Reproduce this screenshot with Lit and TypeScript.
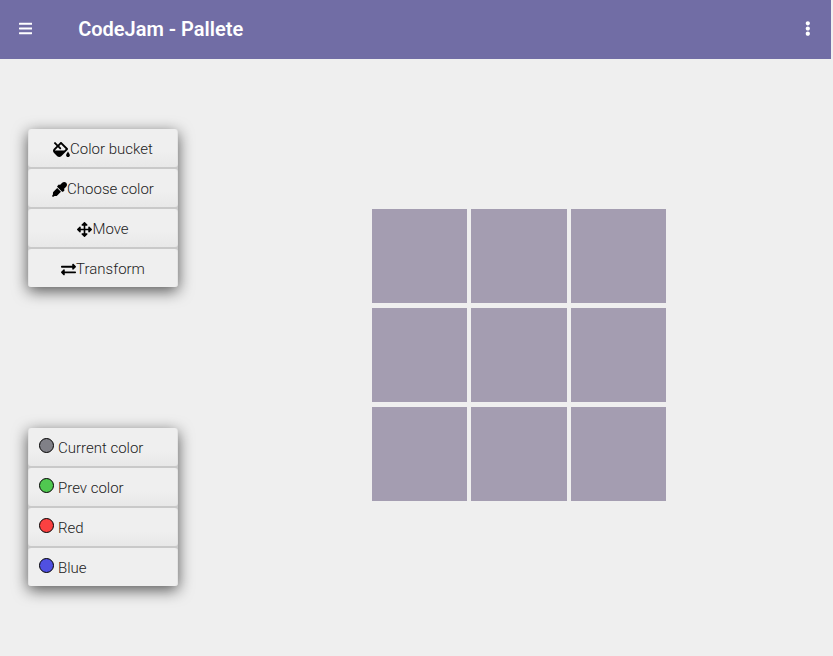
import { LitElement, html, css, svg } from "lit";
import { customElement } from "lit/decorators.js";
import { classMap } from "lit/directives/class-map.js";

interface Glyph {
  width: number;
  path: string;
}

const glyphs: Record<string, Glyph> = {
  bars: {
    width: 448,
    path: "M16 132h416c8.837 0 16-7.163 16-16V76c0-8.837-7.163-16-16-16H16C7.163 60 0 67.163 0 76v40c0 8.837 7.163 16 16 16zm0 160h416c8.837 0 16-7.163 16-16v-40c0-8.837-7.163-16-16-16H16c-8.837 0-16 7.163-16 16v40c0 8.837 7.163 16 16 16zm0 160h416c8.837 0 16-7.163 16-16v-40c0-8.837-7.163-16-16-16H16c-8.837 0-16 7.163-16 16v40c0 8.837 7.163 16 16 16z",
  },
  dots: {
    width: 192,
    path: "M96 184c39.8 0 72 32.2 72 72s-32.2 72-72 72-72-32.2-72-72 32.2-72 72-72zM24 80c0 39.8 32.2 72 72 72s72-32.2 72-72S135.8 8 96 8 24 40.2 24 80zm0 352c0 39.8 32.2 72 72 72s72-32.2 72-72-32.2-72-72-72-72 32.2-72 72z",
  },
  bucket: {
    width: 576,
    path: "M512 320s-64 92.65-64 128c0 35.35 28.66 64 64 64s64-28.65 64-64-64-128-64-128zm-9.37-102.94L294.94 9.37C288.69 3.12 280.5 0 272.31 0s-16.38 3.12-22.62 9.37l-81.58 81.58L81.93 4.76c-6.25-6.25-16.38-6.25-22.62 0L36.69 27.38c-6.24 6.25-6.24 16.38 0 22.62l86.19 86.18-94.76 94.76c-37.49 37.48-37.49 98.26 0 135.75l117.19 117.19c18.74 18.74 43.31 28.12 67.87 28.12 24.57 0 49.13-9.37 67.87-28.12l221.57-221.57c12.5-12.5 12.5-32.75.01-45.25zm-116.22 70.97H65.93c1.36-3.84 3.57-7.98 7.43-11.83l13.15-13.15 81.61-81.61 58.6 58.6c12.49 12.49 32.75 12.49 45.24 0s12.49-32.75 0-45.24l-58.6-58.6 58.95-58.95 162.44 162.44-48.34 48.34z",
  },
  dropper: {
    width: 512,
    path: "M50.75 333.25c-12 12-18.75 28.28-18.75 45.26V424L0 480l32 32 56-32h45.49c16.97 0 33.25-6.74 45.25-18.74l126.64-126.62-128-128L50.75 333.25zM483.88 28.12c-37.47-37.5-98.28-37.5-135.75 0l-77.09 77.09-13.1-13.1c-9.44-9.44-24.65-9.31-33.94 0l-40.97 40.97c-9.37 9.37-9.37 24.57 0 33.94l161.94 161.94c9.44 9.44 24.65 9.31 33.94 0L419.88 288c9.37-9.37 9.37-24.57 0-33.94l-13.1-13.1 77.09-77.09c37.51-37.48 37.51-98.26.01-135.75z",
  },
  move: {
    width: 512,
    path: "M352.201 425.775l-79.196 79.196c-9.373 9.373-24.568 9.373-33.941 0l-79.196-79.196c-15.119-15.119-4.411-40.971 16.971-40.97h51.162L228 284H127.196v51.162c0 21.382-25.851 32.09-40.971 16.971L7.029 272.937c-9.373-9.373-9.373-24.569 0-33.941L86.225 159.8c15.119-15.119 40.971-4.411 40.971 16.971V228H228V127.196h-51.23c-21.382 0-32.09-25.851-16.971-40.971l79.196-79.196c9.373-9.373 24.568-9.373 33.941 0l79.196 79.196c15.119 15.119 4.411 40.971-16.971 40.971h-51.162V228h100.804v-51.162c0-21.382 25.851-32.09 40.97-16.971l79.196 79.196c9.373 9.373 9.373 24.569 0 33.941L425.773 352.2c-15.119 15.119-40.971 4.411-40.97-16.971V284H284v100.804h51.23c21.382 0 32.09 25.851 16.971 40.971z",
  },
  exchange: {
    width: 512,
    path: "M0 168v-16c0-13.255 10.745-24 24-24h360V80c0-21.367 25.899-32.042 40.971-16.971l80 80c9.372 9.373 9.372 24.569 0 33.941l-80 80C409.956 271.982 384 261.456 384 240v-48H24c-13.255 0-24-10.745-24-24zm488 152H128v-48c0-21.314-25.862-32.08-40.971-16.971l-80 80c-9.372 9.373-9.372 24.569 0 33.941l80 80C102.057 463.997 128 453.437 128 432v-48h360c13.255 0 24-10.745 24-24v-16c0-13.255-10.745-24-24-24z",
  },
};

const icon = (name: string) => html`<svg
  class="icon"
  viewBox="0 0 ${glyphs[name].width} 512"
  aria-hidden="true"
>${svg`<path d=${glyphs[name].path}></path>`}</svg>`;

const tools = [
  { icon: "bucket", label: "Color bucket" },
  { icon: "dropper", label: "Choose color" },
  { icon: "move", label: "Move" },
  { icon: "exchange", label: "Transform" },
];

const colors = [
  { name: "current", label: "Current color" },
  { name: "prev", label: "Prev color" },
  { name: "red", label: "Red" },
  { name: "blue", label: "Blue" },
];

@customElement("app-root")
export class AppRoot extends LitElement {
  static styles = css`
    :host {
      display: flex;
      flex-direction: column;
      min-height: 100vh;
      background: #efefef;
      color: #222;
      font-family: Roboto, "Open Sans", sans-serif;
      font-size: 15px;
      font-weight: 300;
    }
    * {
      box-sizing: border-box;
    }
    .header {
      display: flex;
      align-items: center;
      height: 59px;
      margin-right: 2px;
      padding: 0 18px 2px 17px;
      background: #716da5;
      color: #fff;
    }
    .title {
      flex: 1;
      margin: 0 0 0 44px;
      font-size: 20px;
      line-height: 28px;
      font-weight: 600;
    }
    .icon {
      display: block;
      flex: none;
      height: 14px;
      fill: currentColor;
    }
    .icon-button {
      display: flex;
      justify-content: center;
      padding: 2px;
      border: 0;
      background: none;
      color: inherit;
    }
    .icon-button .icon,
    .tool .icon {
      height: 15px;
    }
    .main {
      flex: 1;
      display: flex;
    }
    .side {
      display: flex;
      flex-direction: column;
      gap: 141px;
      padding: 70px 27px 70px 28px;
    }
    .panel {
      display: flex;
      flex-direction: column;
      gap: 2px;
      width: 150px;
      margin: 0;
      padding: 0;
      list-style: none;
      border-radius: 3px;
      background: #c9c9c9;
      box-shadow: 0 4px 15px rgba(0, 0, 0, 0.65);
    }
    .item {
      display: flex;
      align-items: center;
      width: 100%;
      height: 38px;
      border: 1px solid #e4e4e4;
      border-width: 0 1px;
      border-radius: 3px;
      background: linear-gradient(#efefef 60%, #e8e8e8);
      color: #222;
      font: inherit;
      line-height: 20px;
    }
    .row:last-child .item {
      background: #efefef;
    }
    .item.tool {
      justify-content: center;
      padding: 2px 0 0;
    }
    .tool .icon {
      color: #000;
    }
    .item.color {
      gap: 4px;
      padding: 2px 10px 0;
    }
    .swatch {
      width: 15px;
      height: 15px;
      margin-bottom: 5px;
      border: 1px solid #000;
      border-radius: 50%;
    }
    .current {
      background: #808087;
    }
    .prev {
      background: #50c850;
    }
    .red {
      background: #fa4141;
    }
    .blue {
      background: #5050e1;
    }
    .stage {
      flex: 1;
      display: flex;
      justify-content: center;
      align-items: flex-start;
      padding-top: 150px;
    }
    .canvas {
      display: grid;
      grid-template-columns: repeat(3, 1fr);
      grid-auto-rows: 94px;
      gap: 5px 4px;
      width: 294px;
    }
    .cell {
      background: #a49db1;
    }
  `;

  render() {
    return html`
      <header class="header">
        <button class="icon-button" aria-label="Menu">${icon("bars")}</button>
        <h1 class="title">CodeJam - Pallete</h1>
        <button class="icon-button" aria-label="More">${icon("dots")}</button>
      </header>
      <main class="main">
        <aside class="side">
          <ul class="panel">
            ${tools.map(
              (t) => html`<li class="row">
                <button class="item tool">${icon(t.icon)}<span>${t.label}</span></button>
              </li>`,
            )}
          </ul>
          <ul class="panel">
            ${colors.map(
              (c) => html`<li class="row">
                <button class="item color">
                  <span class=${classMap({ swatch: true, [c.name]: true })}></span>
                  <span>${c.label}</span>
                </button>
              </li>`,
            )}
          </ul>
        </aside>
        <section class="stage">
          <div class="canvas">
            ${Array.from({ length: 9 }, () => html`<div class="cell"></div>`)}
          </div>
        </section>
      </main>
    `;
  }
}
